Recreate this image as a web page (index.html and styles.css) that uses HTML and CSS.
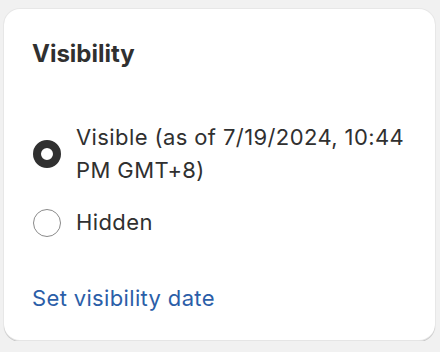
FILE: index.html
```html
<!DOCTYPE html>
<html lang="en">
<head>
    <meta charset="UTF-8">
    <meta name="viewport" content="width=device-width, initial-scale=1.0">
    <title>Visibility</title>
    <link rel="stylesheet" href="styles.css">
</head>
<body>

    <!-- Visibility Card -->
    <div class="card">
        <h2 class="card-title">Visibility</h2>

        <div class="radio-list">
            <label class="radio-row">
                <input type="radio" name="visibility" value="visible" checked>
                <span class="radio-mark"></span>
                <span class="radio-text">Visible (as of 7/19/2024, 10:44 PM GMT+8)</span>
            </label>

            <label class="radio-row">
                <input type="radio" name="visibility" value="hidden">
                <span class="radio-mark"></span>
                <span class="radio-text">Hidden</span>
            </label>
        </div>

        <a href="#" class="date-link">Set visibility date</a>
    </div>

</body>
</html>
```

FILE: styles.css
```css
/* General Styles */
* {
    margin: 0;
    padding: 0;
    box-sizing: border-box;
    font-family: Inter, "Noto Sans", sans-serif;
}
body {
    background-color: #f1f1f1;
    padding: 9px 5px 0 4px;
    color: #303030;
}

/* Card */
.card {
    background-color: #fff;
    border-radius: 16px;
    height: 332px;
    padding: 29px 28px 0 28px;
    box-shadow: 0 1px 0 rgba(0, 0, 0, 0.12), inset 0 -1px 0 rgba(0, 0, 0, 0.1), 0 0 0 1px rgba(0, 0, 0, 0.04);
}
.card-title {
    font-size: 24px;
    font-weight: 650;
    line-height: 32px;
}

/* Radio Buttons */
.radio-list {
    margin-top: 51px;
    display: flex;
    flex-direction: column;
    gap: 19px;
}
.radio-row {
    display: flex;
    align-items: center;
    cursor: pointer;
}
.radio-row input {
    display: none;
}
.radio-mark {
    flex: none;
    width: 28px;
    height: 28px;
    border-radius: 50%;
    border: 1.5px solid #8a8a8a;
    margin-left: 1px;
    margin-right: 15px;
}
.radio-row input:checked + .radio-mark {
    border: 8.5px solid #303030;
}
.radio-text {
    font-size: 22px;
    line-height: 33px;
    letter-spacing: 0.4px;
}

/* Link */
.date-link {
    display: inline-block;
    margin-top: 43px;
    font-size: 22px;
    line-height: 33px;
    letter-spacing: 0.35px;
    color: #2b5ea8;
    text-decoration: none;
}
```
